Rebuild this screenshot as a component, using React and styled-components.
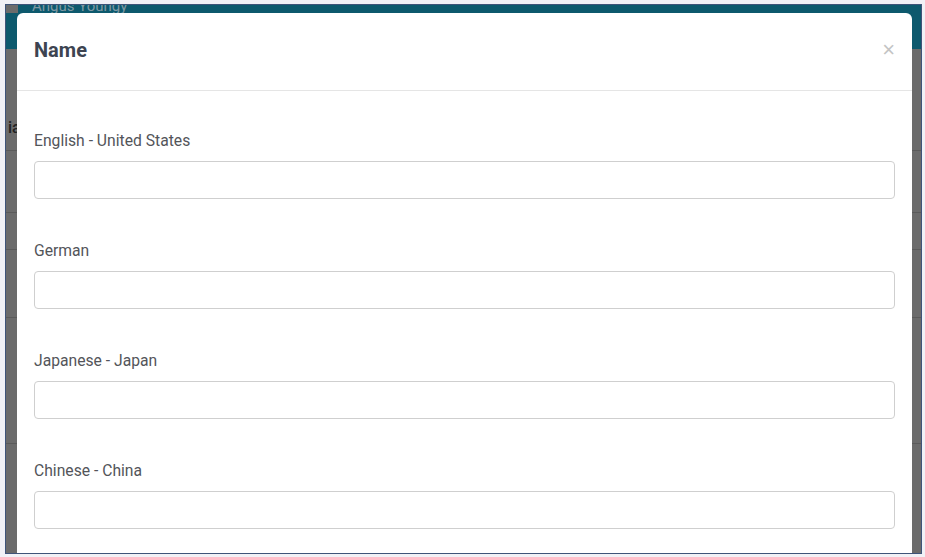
import styled, { createGlobalStyle } from "styled-components";

const GlobalStyle = createGlobalStyle`
  html, body {
    margin: 0;
    padding: 0;
    background: #f1f1f6;
    font-family: Roboto, "Liberation Sans", Arial, sans-serif;
  }
  * { box-sizing: border-box; }
`;

const Screen = styled.div`
  position: relative;
  width: 917px;
  height: 550px;
  margin: 4px 0 0 5px;
  border: 1px solid #3f5479;
  background: #6b6b6b;
  overflow: hidden;
`;

const AppBar = styled.div`
  display: flex;
  align-items: flex-start;
  height: 44px;
  background: #0d596d;
  padding-left: 26px;
`;

const AppBarSide = styled.div`
  width: 12px;
  height: 8px;
  margin-left: -26px;
  margin-right: 14px;
  background: #6b6b6b;
`;

const AppBarUser = styled.span`
  font-size: 15px;
  line-height: 1;
  margin-top: -6px;
  color: #7f98a3;
`;

const Row = styled.div`
  height: ${(p) => p.h}px;
  border-bottom: 1px solid #5a5a5a;
  padding: 0 0 ${(p) => p.pb || 0}px 2px;
  display: flex;
  align-items: ${(p) => (p.pb ? "flex-end" : "center")};
  color: #222;
  font-size: 16px;
  font-weight: 500;
`;

const Modal = styled.div`
  position: absolute;
  left: 11px;
  top: 8px;
  width: 895px;
  height: 560px;
  background: #fff;
  border-radius: 6px;
  display: flex;
  flex-direction: column;
`;

const ModalHeader = styled.div`
  display: flex;
  align-items: center;
  justify-content: space-between;
  height: 78px;
  padding: 0 17px 4px 17px;
  border-bottom: 1px solid #e5e5e5;
`;

const ModalTitle = styled.h4`
  margin: 0;
  font-size: 20px;
  font-weight: 700;
  color: #3d4451;
`;

const CloseButton = styled.button`
  border: none;
  background: none;
  padding: 0;
  font-size: 22px;
  line-height: 1;
  color: #c4c4c4;
  font-family: "Liberation Sans", Arial, sans-serif;
  cursor: pointer;
`;

const ModalBody = styled.div`
  padding: 41px 17px 0 17px;
  display: flex;
  flex-direction: column;
  gap: 43px;
`;

const Field = styled.div`
  display: flex;
  flex-direction: column;
  gap: 11px;
`;

const Label = styled.label`
  font-size: 15.7px;
  line-height: 18px;
  color: #53555a;
`;

const Input = styled.input`
  width: 861px;
  height: 38px;
  border: 1px solid #cfcfcf;
  border-radius: 4px;
  padding: 6px 12px;
  font-size: 15px;
  font-family: inherit;
  outline: none;
`;

const languages = [
  "English - United States",
  "German",
  "Japanese - Japan",
  "Chinese - China",
];

const rows = [102, 62, 37, 68, 126, 120];

const App = () => {
  return (
    <>
      <GlobalStyle />
      <Screen>
        <AppBar>
          <AppBarSide />
          <AppBarUser>Angus Youngy</AppBarUser>
        </AppBar>
        {rows.map((h, i) => (
          <Row key={i} h={h} pb={i === 0 ? 13 : 0}>{i === 0 ? "ia" : ""}</Row>
        ))}
        <Modal>
          <ModalHeader>
            <ModalTitle>Name</ModalTitle>
            <CloseButton aria-label="Close">×</CloseButton>
          </ModalHeader>
          <ModalBody>
            {languages.map((lang) => (
              <Field key={lang}>
                <Label>{lang}</Label>
                <Input type="text" />
              </Field>
            ))}
          </ModalBody>
        </Modal>
      </Screen>
    </>
  );
};

export default App;
